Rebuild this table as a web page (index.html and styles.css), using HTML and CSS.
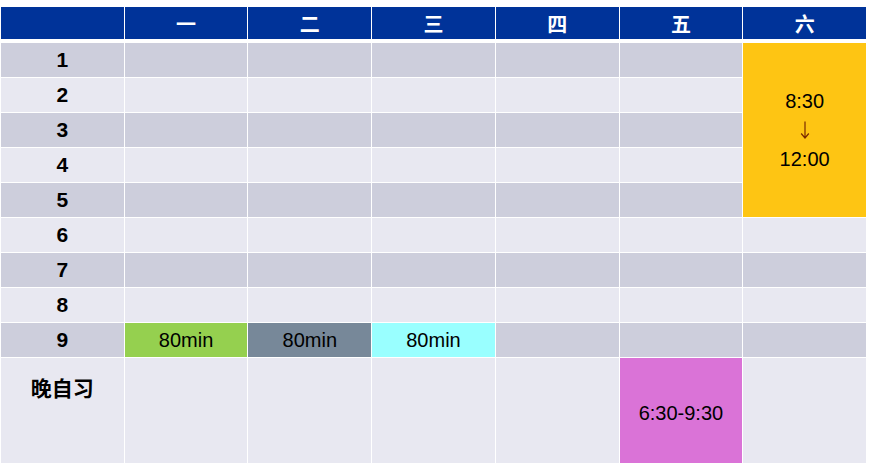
FILE: index.html
```html
<!DOCTYPE html>
<html lang="zh">
<head>
<meta charset="utf-8">
<link rel="stylesheet" href="styles.css">
</head>
<body>
<div class="grid">
  <div class="h"></div>
  <div class="h">一</div>
  <div class="h">二</div>
  <div class="h">三</div>
  <div class="h">四</div>
  <div class="h">五</div>
  <div class="h">六</div>

  <div class="n d">1</div><div class="d"></div><div class="d"></div><div class="d"></div><div class="d"></div><div class="d"></div>
  <div class="sat">
    <span>8:30</span>
    <span class="arrow"><svg width="10" height="18" viewBox="0 0 10 18"><path d="M5 0.5 V17 M1.2 12.5 L5 17 L8.8 12.5" fill="none" stroke="#7a2a00" stroke-width="1.2"/></svg></span>
    <span>12:00</span>
  </div>
  <div class="n l">2</div><div class="l"></div><div class="l"></div><div class="l"></div><div class="l"></div><div class="l"></div>
  <div class="n d">3</div><div class="d"></div><div class="d"></div><div class="d"></div><div class="d"></div><div class="d"></div>
  <div class="n l">4</div><div class="l"></div><div class="l"></div><div class="l"></div><div class="l"></div><div class="l"></div>
  <div class="n d">5</div><div class="d"></div><div class="d"></div><div class="d"></div><div class="d"></div><div class="d"></div>
  <div class="n l">6</div><div class="l"></div><div class="l"></div><div class="l"></div><div class="l"></div><div class="l"></div><div class="l"></div>
  <div class="n d">7</div><div class="d"></div><div class="d"></div><div class="d"></div><div class="d"></div><div class="d"></div><div class="d"></div>
  <div class="n l">8</div><div class="l"></div><div class="l"></div><div class="l"></div><div class="l"></div><div class="l"></div><div class="l"></div>
  <div class="n d">9</div><div class="t green">80min</div><div class="t slate">80min</div><div class="t cyan">80min</div><div class="d"></div><div class="d"></div><div class="d"></div>
  <div class="eve l">晚自习</div><div class="l"></div><div class="l"></div><div class="l"></div><div class="l"></div><div class="t magenta">6:30-9:30</div><div class="l"></div>
</div>
</body>
</html>
```

FILE: styles.css
```css
html, body {
  margin: 0;
  padding: 0;
  background: #ffffff;
}
body {
  padding: 7px 0 0 1px;
  font-family: "Liberation Sans", "Noto Sans CJK SC", sans-serif;
}
.grid {
  width: 865px;
  display: grid;
  grid-template-columns: repeat(7, 1fr);
  grid-template-rows: 35px repeat(9, 34px) 105px;
  gap: 1px;
}
.h {
  background: #003399;
  color: #ffffff;
  font-family: "Liberation Sans", "Noto Sans CJK SC", sans-serif;
  font-weight: bold;
  font-size: 20px;
  height: 32px;
  display: flex;
  align-items: center;
  justify-content: center;
  align-self: start;
}
.d { background: #cdcedc; }
.l { background: #e8e8f1; }
.n {
  display: flex;
  align-items: center;
  justify-content: center;
  font-weight: bold;
  font-size: 21px;
  color: #000;
}
.eve {
  font-family: "Noto Sans CJK SC", sans-serif;
  font-weight: bold;
  font-size: 21px;
  text-align: center;
  line-height: 24px;
  padding-top: 17px;
  color: #000;
}
.sat {
  grid-column: 7;
  grid-row: 2 / span 5;
  background: #fec513;
  display: flex;
  flex-direction: column;
  align-items: center;
  justify-content: center;
  font-size: 20px;
  line-height: 29px;
  color: #000;
}
.arrow {
  display: flex;
  align-items: center;
  justify-content: center;
  height: 29px;
}
.arrow svg { display: block; }
.t {
  display: flex;
  align-items: center;
  justify-content: center;
  font-size: 20px;
  color: #000;
}
.green { background: #95d04f; }
.slate { background: #778899; }
.cyan { background: #99ffff; }
.magenta { background: #da73d7; padding-top: 6px; }
```
